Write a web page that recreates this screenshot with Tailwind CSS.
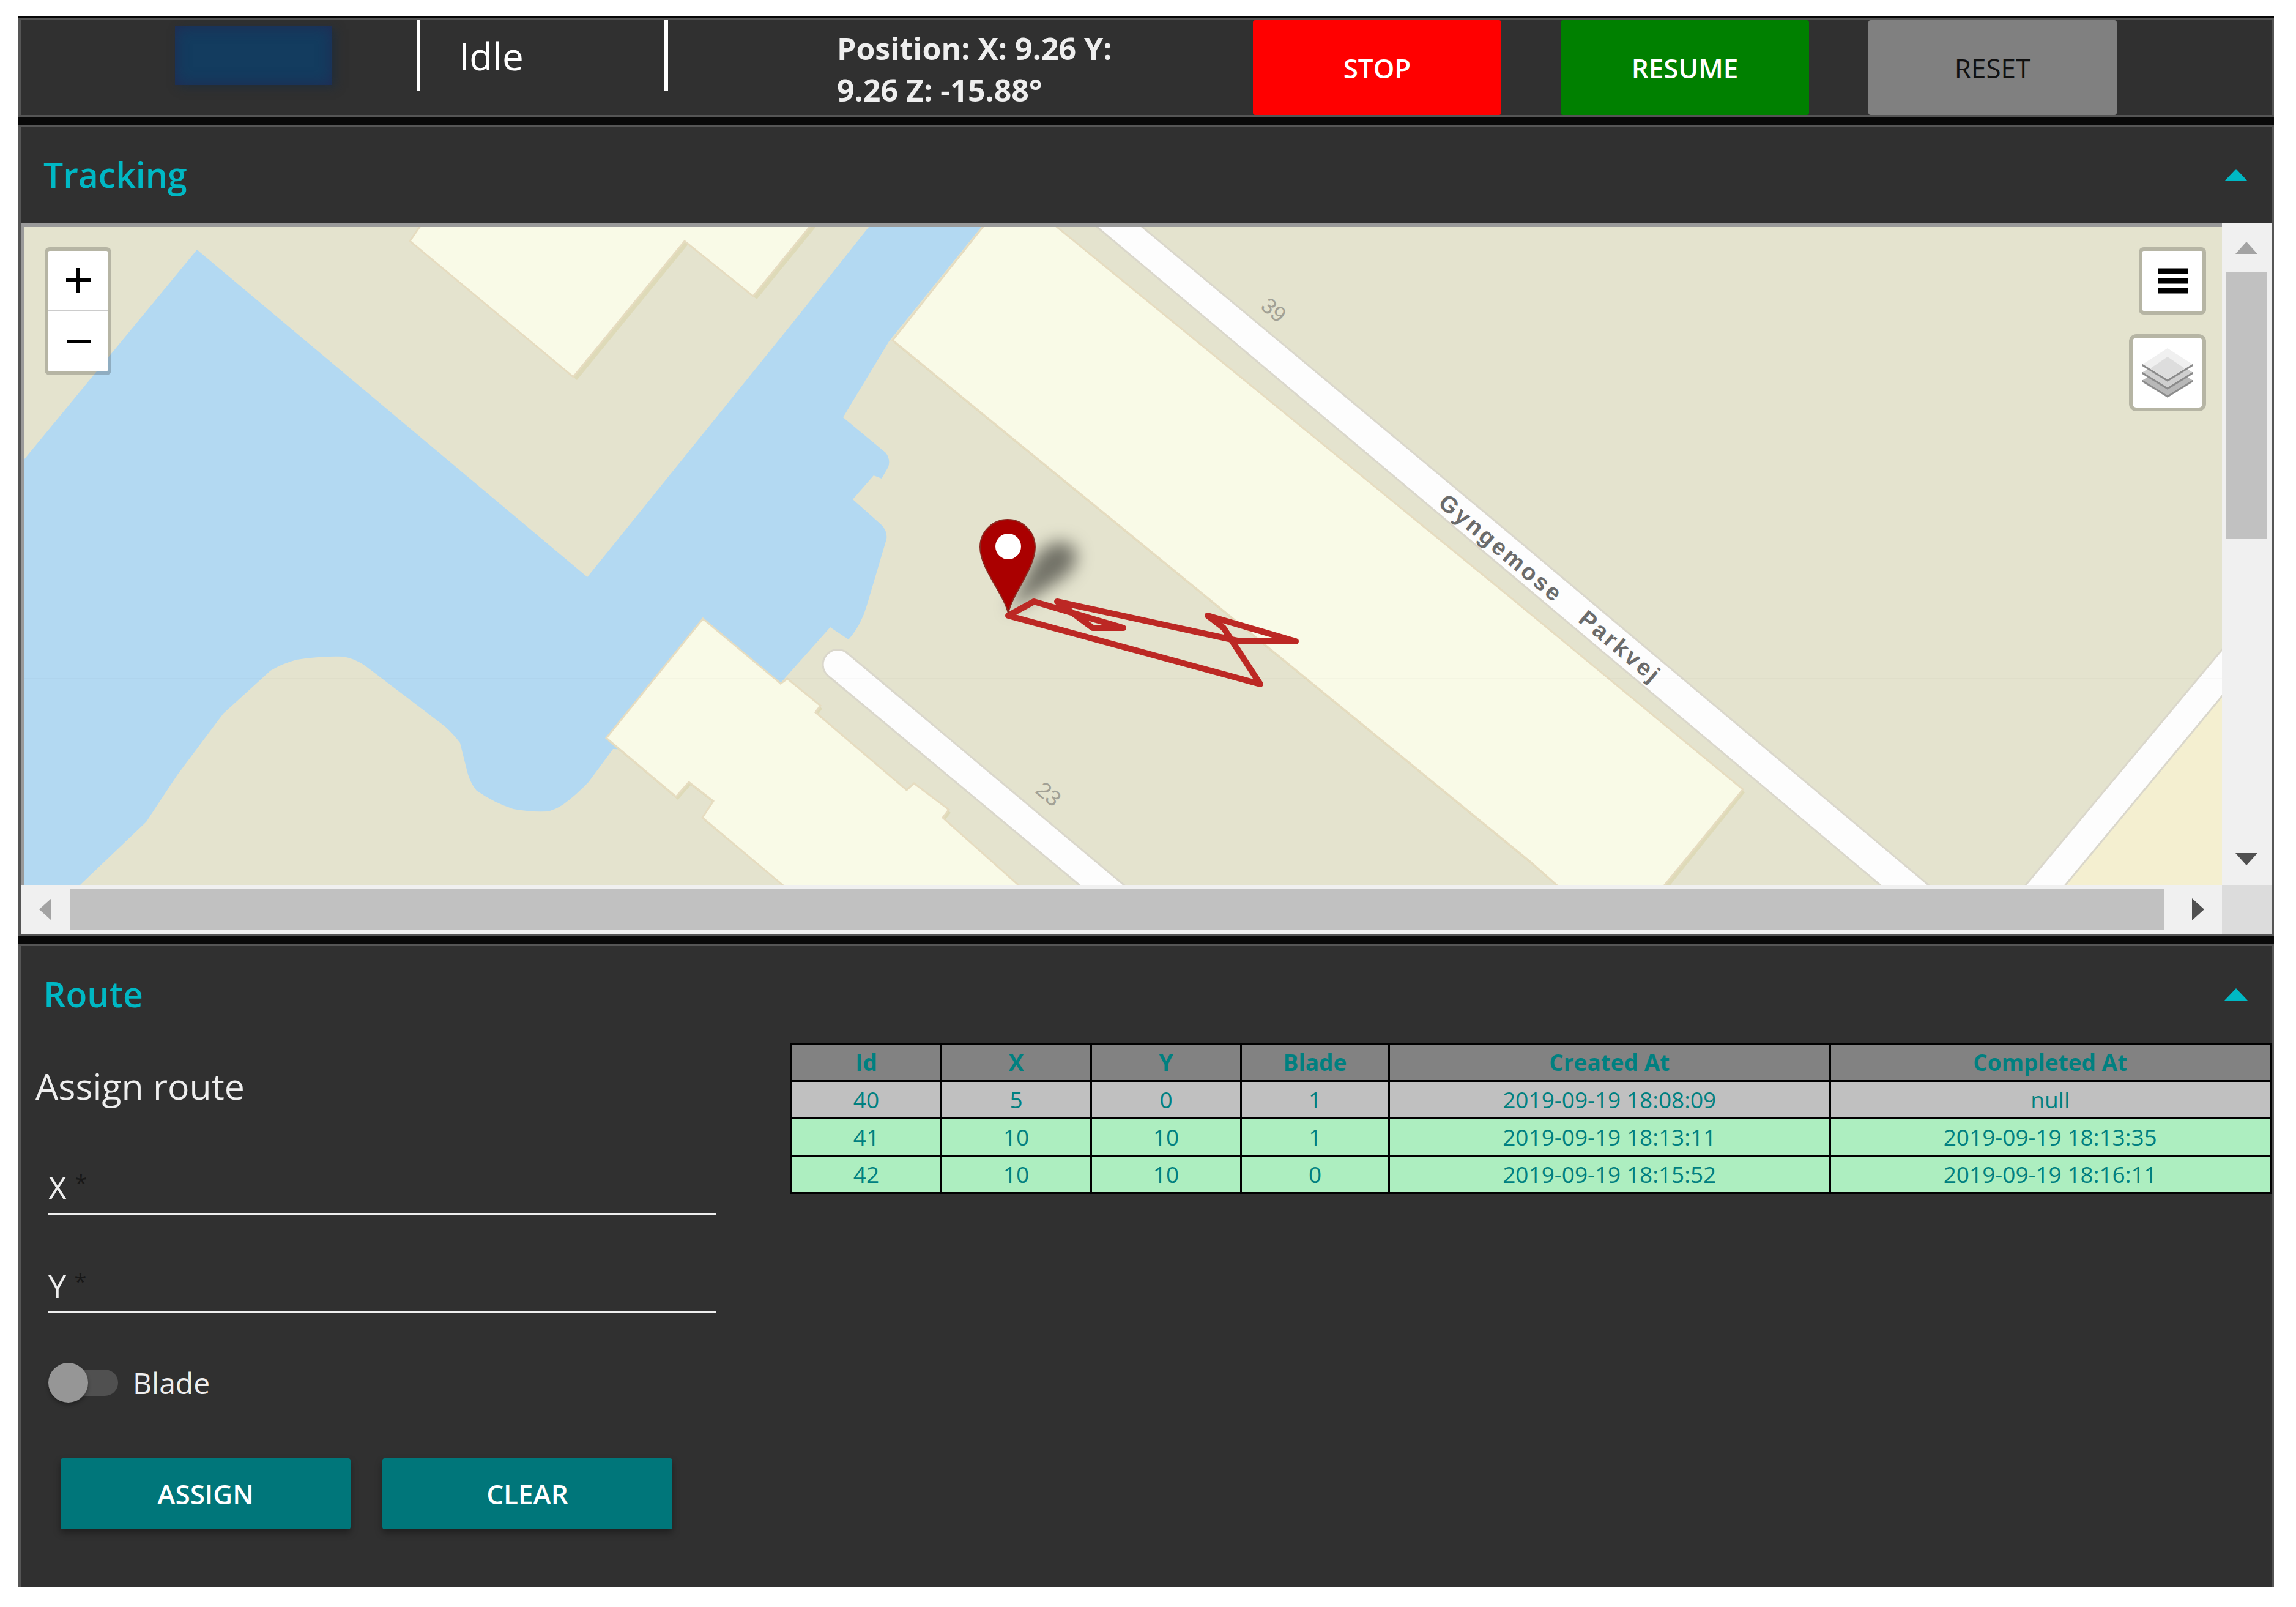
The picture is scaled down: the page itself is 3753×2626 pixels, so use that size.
<!DOCTYPE html>
<html lang="en">
<head>
<meta charset="utf-8">
<title>Mower control</title>
<script src="https://cdn.jsdelivr.net/npm/@tailwindcss/browser@4"></script>
</head>
<body class="bg-white font-['Open_Sans','Noto_Sans',sans-serif] text-[#eeeeee]">
<main class="pt-[26px] pr-9 pb-8 pl-[30px]">
  <div class="flex flex-col gap-[13px] bg-[#080808] pt-1">

    <!-- Status bar -->
    <header class="flex h-[161px] items-start border-x-4 border-y-3 border-[#555555] bg-[#303030]">
      <div class="w-[648px] shrink-0 pt-[10px] pl-[252px]">
        <div class="h-24 w-[257px] bg-[#133c5f] shadow-[6px_4px_14px_rgba(30,45,60,0.8),inset_0_0_24px_rgba(36,40,80,0.9)]"></div>
      </div>
      <div class="h-[116px] w-[410px] shrink-0 border-r-[6px] border-l-4 border-white pl-16 text-[62px] leading-[116px] text-white">Idle</div>
      <p class="ml-[276px] w-[480px] shrink-0 self-center pt-1 text-[50px] leading-[68px] font-bold">Position: X: 9.26 Y: 9.26 Z: -15.88°</p>
      <div class="ml-[200px] flex h-full gap-[97px] text-[44px]">
        <button type="button" class="w-[406px] rounded-sm bg-[#ff0000] font-semibold text-white">STOP</button>
        <button type="button" class="w-[406px] rounded-sm bg-[#008000] font-semibold text-white">RESUME</button>
        <button type="button" class="w-[406px] rounded-sm bg-[#808080] text-[#111111]">RESET</button>
      </div>
    </header>

    <!-- Tracking -->
    <section class="border-x-4 border-y-3 border-[#555555] bg-[#303030]">
      <button type="button" class="flex h-[158px] w-full items-center justify-between pr-[39px] pl-[37px] text-[57px] font-semibold text-[#00b8c4]">
        <span>Tracking</span>
        <svg class="h-5 w-[38px]" viewBox="0 0 38 20" fill="currentColor"><path d="M0 20 19 0l19 20z"/></svg>
      </button>
      <div class="grid grid-cols-[minmax(0,1fr)_81px] grid-rows-[1081px_80px] bg-[#f0f0f0]">
        <div class="relative overflow-hidden border-t-[6px] border-l-[6px] border-[#9a9a9a] bg-[#e4e3ce]">
          <svg class="h-full w-full" viewBox="40 372 3592 1075" preserveAspectRatio="xMidYMid slice" font-family="Liberation Sans, sans-serif">
            <defs><filter id="soft" x="-50%" y="-50%" width="200%" height="200%"><feGaussianBlur stdDeviation="14"/></filter></defs>
            <!-- water -->
            <path fill="#b3d9f2" d="M40 751 322 409 960 944 1300 523 1420 372H1604L1453 559 1378 683 1448 741Q1456 752 1452 764L1441 783 1428 778 1394 817 1440 858Q1451 868 1449 882L1417 990Q1408 1022 1387 1046L1357 1026 1276 1117 1160 1230 1002 1225 962 1279Q942 1300 920 1316 906 1325 894 1327 865 1328 839 1323 808 1313 779 1293 768 1280 763 1259L752 1215Q740 1199 726 1187L597 1089Q580 1077 561 1074 520 1073 485 1079 462 1085 442 1097L365 1167 290 1267 239 1344 131 1447H40Z"/>
            <!-- buildings -->
            <g fill="#dedab8">
              <path transform="translate(6 5)" d="M684 360 670 395 937 617 1119 395 1231 485 1333 360Z"/>
              <path transform="translate(3 5)" d="M991 1207 1105 1303 1126 1279 1166 1310 1148 1337 1285 1450H1668L1541 1337 1551 1324 1494 1281 1482 1292 1333 1165 1341 1154 1287 1110Z"/>
              <path transform="translate(3 5)" d="M1459 557 2500 1408 2548 1450H2721L2849 1291 1900 520Z"/>
            </g>
            <g fill="#f9fae7" stroke="#e6dcc0" stroke-width="3">
              <path d="M694 360 670 395 937 617 1119 395 1231 485 1333 360Z"/>
              <path d="M1149 1012 991 1207 1105 1303 1126 1279 1166 1310 1148 1337 1285 1452H1670L1541 1337 1551 1324 1494 1281 1482 1292 1333 1165 1341 1154 1287 1110 1276 1118Z"/>
              <path d="M1616 360 1459 557 2500 1408 2550 1452H2717L2849 1291 2453 964 1713 360Z"/>
            </g>
            <!-- roads -->
            <path fill="#f4efd0" d="M3376 1447 3632 1139V1447Z"/>
            <g fill="#fdfdfd" stroke="#dad7cb" stroke-width="3">
              <path d="M1779 360 2453 926 3085 1457H3164L2453 860 1853 360Z"/>
              <path d="M1764 1447 1353 1105A24 24 0 0 1 1386 1069L1849 1457H1776Z"/>
              <path d="M3303 1457 3640 1053V1129L3368 1457Z"/>
            </g>
            <path d="M40 1110H3632" fill="none" stroke="#000" stroke-opacity=".02" stroke-width="2"/>
            <!-- street labels -->
            <g fill="#a2a195" font-size="36" text-anchor="middle">
              <text transform="translate(2074 517) rotate(40)">39</text>
              <text transform="translate(1706 1308) rotate(40)">23</text>
            </g>
            <g fill="#6b6b6b" font-size="38" font-weight="700" class="tracking-widest">
              <text transform="translate(2349 826) rotate(40)">Gyngemose</text>
              <text transform="translate(2578 1016) rotate(40)">Parkvej</text>
            </g>
            <!-- marker shadow, driven route, marker -->
            <path filter="url(#soft)" fill="#000" fill-opacity=".5" d="M1648 1000 1690 915Q1715 880 1745 888 1775 905 1745 940 1710 965 1648 1000Z"/>
            <path fill="none" stroke="#bc2824" stroke-width="10" stroke-linejoin="round" stroke-linecap="round" d="M1648 1007 1690 984 1836 1027H1786L1728 984 2027 1049H2118L1974 1007 2000 1027 2060 1119Z"/>
            <path fill="#aa0000" stroke="#8a2a22" stroke-width="2" d="M1648 1003C1640 970 1602 930 1602 895A45 45 0 0 1 1692 895C1692 930 1655 970 1648 1003Z"/>
            <circle cx="1648" cy="894" r="21" fill="#fff"/>
          </svg>

          <div class="absolute top-[33px] left-[33px] flex w-[109px] flex-col rounded-lg border-[6px] border-black/20 bg-white bg-clip-padding">
            <button type="button" aria-label="Zoom in" class="flex h-[99px] items-center justify-center border-b-3 border-[#cccccc]">
              <svg class="h-10 w-10" viewBox="0 0 40 40"><path d="M20 0V40M0 20H40" stroke="#000" stroke-width="6"/></svg>
            </button>
            <button type="button" aria-label="Zoom out" class="flex h-[98px] items-center justify-center">
              <svg class="h-10 w-10" viewBox="0 0 40 40"><path d="M1 20H40" stroke="#000" stroke-width="6"/></svg>
            </button>
          </div>
          <div class="absolute top-[33px] right-[26px] flex flex-col items-end gap-8">
            <button type="button" aria-label="Menu" class="flex h-[110px] w-[110px] items-center justify-center rounded-lg border-[6px] border-black/20 bg-white bg-clip-padding">
              <svg class="h-[42px] w-[52px]" viewBox="0 0 52 42"><path d="M2 5H52M2 21H52M2 37H52" stroke="#000" stroke-width="9"/></svg>
            </button>
            <button type="button" aria-label="Layers" class="flex h-[126px] w-[126px] items-center justify-center rounded-xl border-[6px] border-black/20 bg-white bg-clip-padding">
              <svg class="h-[82px] w-[84px]" viewBox="0 0 84 82">
                <path d="M0 54 42 28 84 54 42 80Z" fill="#b8b8b8"/><path d="M0 54 42 80 84 54" fill="none" stroke="#8c8c8c" stroke-width="3"/>
                <path d="M0 41 42 15 84 41 42 67Z" fill="#cfcfcf"/><path d="M0 41 42 67 84 41" fill="none" stroke="#8a8a8a" stroke-width="3"/>
                <path d="M0 28 42 1 84 28 42 54Z" fill="#f0f0f0"/><path d="M14 34 42 15 70 34 42 53Z" fill="#dddddd"/><path d="M0 28 42 54 84 28" fill="none" stroke="#8a8a8a" stroke-width="3"/>
              </svg>
            </button>
          </div>
        </div>
        <div class="flex flex-col items-center pr-px">
          <div class="flex h-20 items-center"><svg class="h-5 w-9" viewBox="0 0 36 20"><path d="M0 20 18 0l18 20z" fill="#a3a3a3"/></svg></div>
          <div class="h-[435px] w-[68px] bg-[#c1c1c1]"></div>
          <div class="mt-auto flex h-[84px] items-center"><svg class="h-5 w-9" viewBox="0 0 36 20"><path d="M0 0 18 20 36 0z" fill="#505050"/></svg></div>
        </div>
        <div class="flex items-center">
          <div class="flex w-20 justify-center"><svg class="h-9 w-5" viewBox="0 0 20 36"><path d="M20 0 0 18 20 36z" fill="#a3a3a3"/></svg></div>
          <div class="h-[68px] flex-1 bg-[#c1c1c1]"></div>
          <div class="flex w-[94px] justify-center pl-4"><svg class="h-9 w-5" viewBox="0 0 20 36"><path d="M0 0 20 18 0 36z" fill="#505050"/></svg></div>
        </div>
        <div class="bg-[#dcdcdc]"></div>
      </div>
    </section>

    <!-- Route -->
    <section class="border-x-4 border-t-4 border-[#555555] bg-[#303030]">
      <button type="button" class="flex h-[158px] w-full items-center justify-between pr-[39px] pl-[37px] text-[57px] font-semibold text-[#00b8c4]">
        <span>Route</span>
        <svg class="h-5 w-[38px]" viewBox="0 0 38 20" fill="currentColor"><path d="M0 20 19 0l19 20z"/></svg>
      </button>
      <div class="flex items-start">
        <form class="w-[1258px] shrink-0 pt-[30px] pb-[95px]">
          <h2 class="pl-6 text-[59px] leading-20">Assign route</h2>
          <div class="mt-[91px] ml-[45px] flex w-[1091px] flex-col gap-[81px] leading-[70px]">
            <div class="flex border-b-3 border-[#eeeeee] pb-[7px] text-[52px]">
              <label for="x">X <span class="align-top text-[36px] leading-[56px] text-[#181818]">*</span></label>
              <input id="x" type="text" required class="min-w-0 flex-1 bg-transparent pl-4 outline-none">
            </div>
            <div class="flex border-b-3 border-[#eeeeee] pb-[7px] text-[52px]">
              <label for="y">Y <span class="align-top text-[36px] leading-[56px] text-[#181818]">*</span></label>
              <input id="y" type="text" required class="min-w-0 flex-1 bg-transparent pl-4 outline-none">
            </div>
            <div class="flex h-[65px] items-center gap-6 text-[48px]">
              <input id="blade" type="checkbox" class="relative h-[65px] w-[114px] appearance-none before:absolute before:inset-y-[11px] before:right-0 before:left-3 before:rounded-full before:bg-[#505050] after:absolute after:top-0 after:left-0 after:h-[65px] after:w-[65px] after:rounded-full after:bg-[#969696] after:shadow-[0_4px_6px_rgba(0,0,0,0.3)]">
              <label for="blade">Blade</label>
            </div>
          </div>
          <div class="mt-[91px] ml-[65px] flex gap-[52px] text-[44px] font-semibold text-white">
            <button type="button" class="h-[116px] w-[474px] rounded-sm bg-[#00767a] shadow-[0_6px_12px_rgba(0,0,0,0.35)]">ASSIGN</button>
            <button type="button" class="h-[116px] w-[474px] rounded-sm bg-[#00767a] shadow-[0_6px_12px_rgba(0,0,0,0.35)]">CLEAR</button>
          </div>
        </form>
        <table class="min-w-0 flex-1 table-fixed border-collapse bg-[#adeec0] text-center text-[37px] leading-[58px] text-[#008080] [&_td]:border-3 [&_td]:border-black [&_td]:p-0 [&_th]:border-3 [&_th]:border-black [&_th]:p-0">
          <colgroup><col class="w-[245px]"><col class="w-[245px]"><col class="w-[245px]"><col class="w-[242px]"><col><col></colgroup>
          <thead class="bg-[#828282] font-bold">
            <tr><th>Id</th><th>X</th><th>Y</th><th>Blade</th><th>Created At</th><th>Completed At</th></tr>
          </thead>
          <tbody>
            <tr class="bg-[#c0c0c0]"><td>40</td><td>5</td><td>0</td><td>1</td><td>2019-09-19 18:08:09</td><td>null</td></tr>
            <tr><td>41</td><td>10</td><td>10</td><td>1</td><td>2019-09-19 18:13:11</td><td>2019-09-19 18:13:35</td></tr>
            <tr><td>42</td><td>10</td><td>10</td><td>0</td><td>2019-09-19 18:15:52</td><td>2019-09-19 18:16:11</td></tr>
          </tbody>
        </table>
      </div>
    </section>
  </div>
</main>
</body>
</html>
